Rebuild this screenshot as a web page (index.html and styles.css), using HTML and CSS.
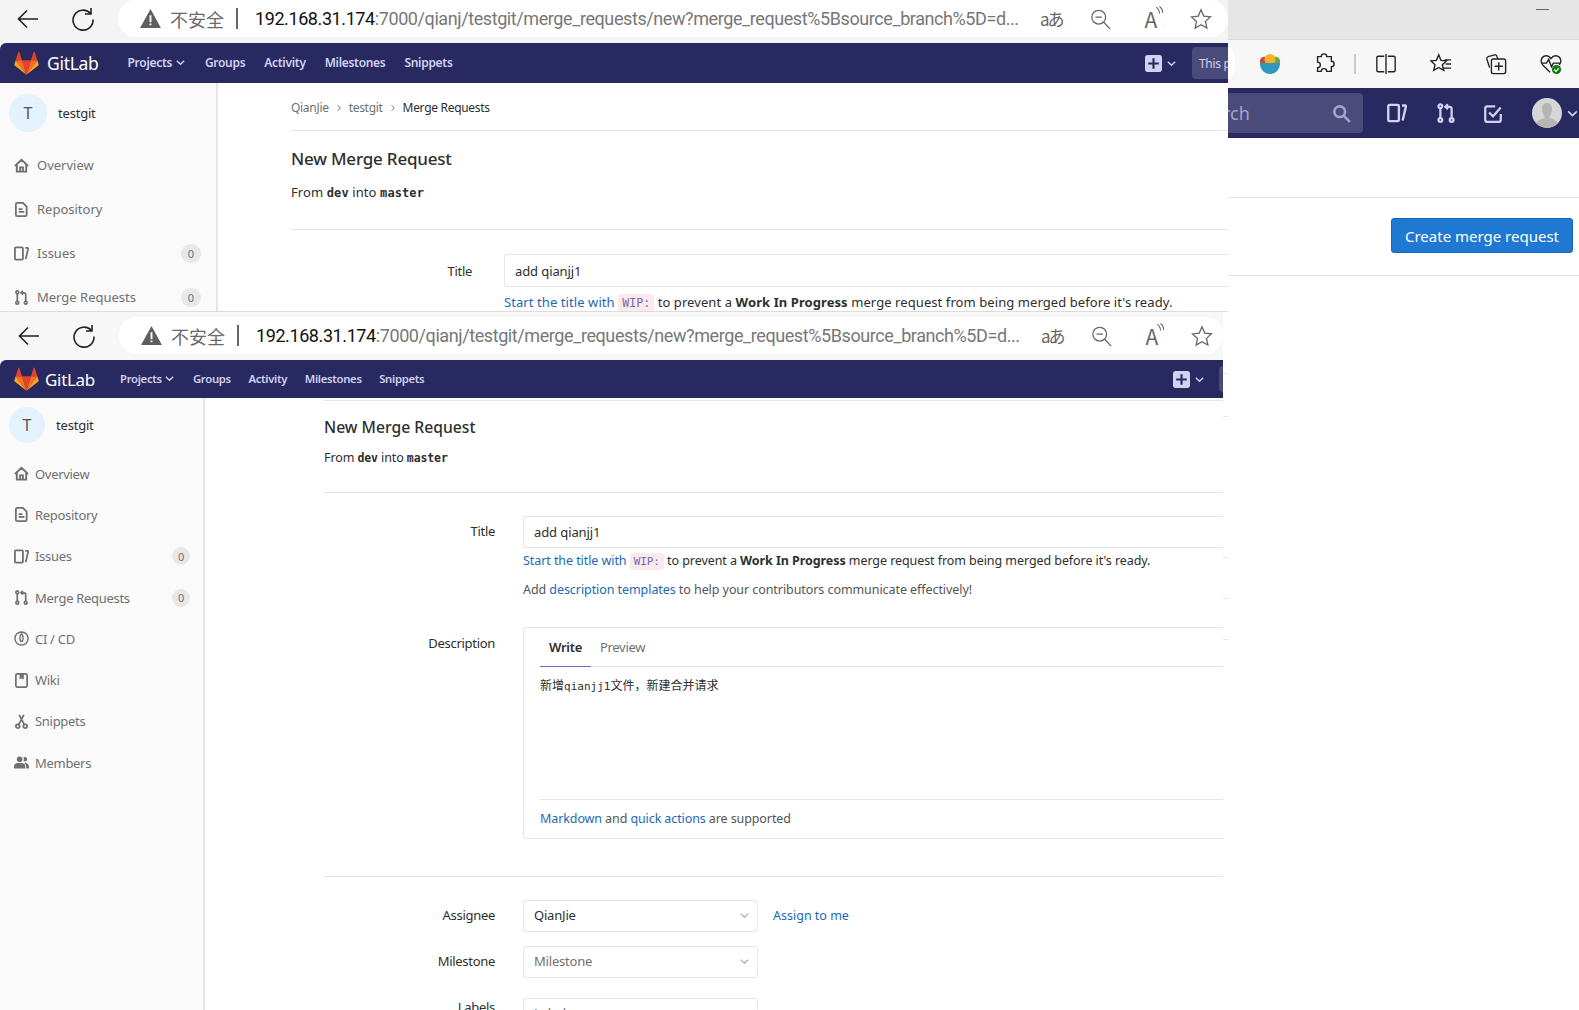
FILE: index.html
```html
<!DOCTYPE html>
<html lang="zh-CN">
<head>
    <meta charset="UTF-8">
    <title>New Merge Request</title>
    <link rel="stylesheet" href="styles.css">
</head>
<body>
    <svg class="defs" width="0" height="0">
        <symbol id="i-tanuki" viewBox="0 0 36 35">
            <path fill="#e24329" d="M18 34.5 24.6 13.5H11.4Z"/>
            <path fill="#fc6d26" d="M18 34.5 11.4 13.5H2.2Z"/>
            <path fill="#fca326" d="M2.2 13.5.3 19.6a1.4 1.4 0 0 0 .5 1.5L18 34.5Z"/>
            <path fill="#e24329" d="M2.2 13.5h9.2L7.5 1a.7.7 0 0 0-1.3 0Z"/>
            <path fill="#fc6d26" d="M18 34.5 24.6 13.5h9.2Z"/>
            <path fill="#fca326" d="M33.8 13.5l1.9 6.1a1.4 1.4 0 0 1-.5 1.5L18 34.5Z"/>
            <path fill="#e24329" d="M33.8 13.5h-9.2L28.5 1a.7.7 0 0 1 1.3 0Z"/>
        </symbol>
        <symbol id="i-back" viewBox="0 0 24 24"><path fill="none" stroke="currentColor" stroke-width="1.6" d="M22 12H2.5M11 3.5 2.5 12l8.5 8.5"/></symbol>
        <symbol id="i-reload" viewBox="0 0 24 24"><path fill="none" stroke="currentColor" stroke-width="1.6" d="M19.5 6.5A10 10 0 1 0 22 12.5M20 1v6h-6"/></symbol>
        <symbol id="i-warn" viewBox="0 0 22 20"><path fill="#5f5f5f" d="M11 0 22 20H0Z"/><path fill="#fff" d="M10 6.500h2v7.500h-2zM10 15.200h2v2h-2z"/></symbol>
        <symbol id="i-zoomout" viewBox="0 0 24 24"><path fill="none" stroke="currentColor" stroke-width="1.4" d="M17 10a7.500 7.500 0 1 1-15 0 7.500 7.500 0 0 1 15 0ZM15 15.500l7 7.500M6 10h7"/></symbol>
        <symbol id="i-star" viewBox="0 0 24 24"><path fill="none" stroke="currentColor" stroke-width="1.4" d="m12 2 3 6.800 7.400.8-5.500 5 1.500 7.300L12 18.200 5.600 22l1.500-7.300-5.500-5L9 8.800Z"/></symbol>
        <symbol id="i-chev" viewBox="0 0 12 12"><path fill="none" stroke="currentColor" stroke-width="1.500" d="m2 4 4 4 4-4"/></symbol>
        <symbol id="i-plus" viewBox="0 0 16 16"><rect width="16" height="16" rx="2.500" fill="#d1d1f0"/><path fill="#292961" d="M7 3h2v4h4v2H9v4H7V9H3V7h4Z"/></symbol>
        <symbol id="i-home" viewBox="0 0 16 16"><path fill="none" stroke="currentColor" stroke-width="2" d="M1 8.500 8 2l7 6.500M3 7v7.500h10V7M6.500 14.500V10h3v4.500"/></symbol>
        <symbol id="i-doc" viewBox="0 0 16 16"><path fill="none" stroke="currentColor" stroke-width="1.900" d="M3.500 1h6l4 4v8.500a1.500 1.500 0 0 1-1.500 1.500H3.500A1.500 1.500 0 0 1 2 13.500v-11A1.500 1.500 0 0 1 3.500 1ZM5 7.500h4M5 10.500h6"/></symbol>
        <symbol id="i-issues" viewBox="0 0 16 16"><path fill="none" stroke="currentColor" stroke-width="1.900" d="M2 1.500h6.500a1 1 0 0 1 1 1v11a1 1 0 0 1-1 1H2a1 1 0 0 1-1-1v-11a1 1 0 0 1 1-1ZM12 2h2.500a.7.7 0 0 1 .6 1L12.500 14"/></symbol>
        <symbol id="i-merge" viewBox="0 0 16 16"><g fill="none" stroke="currentColor" stroke-width="1.800"><circle cx="3.500" cy="2.500" r="1.500"/><circle cx="3.500" cy="13.500" r="1.500"/><circle cx="12.500" cy="13.500" r="1.500"/><path d="M3.500 4v8M12.500 12V4.500A1.500 1.500 0 0 0 11 3H7.500M9.500 1 7.500 3l2 2"/></g></symbol>
        <symbol id="i-rocket" viewBox="0 0 16 16"><g fill="none" stroke="currentColor" stroke-width="1.500"><circle cx="8" cy="8" r="7"/><path d="M8 3c2 2 2 5 1 8H7C6 8 6 5 8 3Z"/></g></symbol>
        <symbol id="i-book" viewBox="0 0 16 16"><path fill="none" stroke="currentColor" stroke-width="1.800" d="M3.500 1h9A1.500 1.500 0 0 1 14 2.500v11a1.500 1.500 0 0 1-1.500 1.500h-9A1.500 1.500 0 0 1 2 13.500v-11A1.500 1.500 0 0 1 3.500 1Z"/><path fill="currentColor" d="M6 1h4.500v6L8.250 5.500 6 7Z"/></symbol>
        <symbol id="i-scissors" viewBox="0 0 16 16"><g fill="none" stroke="currentColor" stroke-width="1.800"><circle cx="4" cy="13" r="2"/><circle cx="12" cy="13" r="2"/><path d="M5 11.300 10.500 1M11 11.300 5.500 1"/></g></symbol>
        <symbol id="i-users" viewBox="0 0 16 16"><path fill="currentColor" d="M6 1.500a3 3 0 1 1 0 6 3 3 0 0 1 0-6ZM11.500 2a2.500 2.500 0 1 1-1.500 4.500 4 4 0 0 0 0-4A2.500 2.500 0 0 1 11.500 2ZM0 14.500v-2A4 4 0 0 1 4 8.500h4a4 4 0 0 1 4 4v2ZM13 14.500v-2A5 5 0 0 0 11 8.500a4 4 0 0 1 5 4v2Z"/></symbol>
    </svg>

    <!-- window behind, only its right edge shows -->
    <section class="window win-back">
        <div class="titlebar"><span class="minimize"></span></div>
        <div class="ext-bar">
            <span class="pill-end"></span>
            <svg class="ext ext-bowl" viewBox="0 0 24 24">
                <circle cx="6" cy="9" r="5" fill="#c8473f"/>
                <circle cx="18" cy="9" r="5" fill="#67a84a"/>
                <circle cx="12" cy="7" r="6" fill="#f3b22a"/>
                <path fill="#2f97bb" d="M1 11h22c0 7-5 12-11 12S1 18 1 11Z"/>
            </svg>
            <svg class="ext ext-puzzle" viewBox="0 0 24 24"><path fill="none" stroke="#222" stroke-width="1.500" d="M9 4a3 3 0 0 1 6 0h5v5a3 3 0 0 1 0 6v5h-5a3 3 0 0 0-6 0H5v-4a3 3 0 0 0 0-6V4Z"/></svg>
            <span class="ext-sep"></span>
            <svg class="ext ext-split" viewBox="0 0 24 24"><path fill="none" stroke="#222" stroke-width="1.500" d="M10 3.500H3.500A1.500 1.500 0 0 0 2 5v14a1.500 1.500 0 0 0 1.500 1.500H10M14 3.500h6.500A1.500 1.500 0 0 1 22 5v14a1.500 1.500 0 0 1-1.500 1.500H14M12 1v22"/></svg>
            <svg class="ext ext-favs" viewBox="0 0 24 24"><path fill="none" stroke="#222" stroke-width="1.500" d="M9.500 2 12 8l6 .6-4.500 4.200L15 19l-5.500-3.200L4 19l1.500-6.200L1 8.600 7 8ZM16 7.500h7M17 12h6M15 16.500h8"/></svg>
            <svg class="ext ext-coll" viewBox="0 0 24 24"><path fill="none" stroke="#222" stroke-width="1.500" d="M5 16 2 6.500A2 2 0 0 1 3.500 4l7-2A2 2 0 0 1 13 3.500l.7 2.500M9 6.500h11.500A2 2 0 0 1 22.500 8.500v12a2 2 0 0 1-2 2H9a2 2 0 0 1-2-2V8.500a2 2 0 0 1 2-2ZM15 10v9M10.500 14.500h9"/></svg>
            <svg class="ext ext-health" viewBox="0 0 24 24">
                <path fill="none" stroke="#222" stroke-width="1.500" d="M11 21 3 13C0 10 1 3.500 6.500 3c2.500-.2 4 1 5.500 3 1.500-2 3-3.200 5.500-3C23 3.500 24 10 21 13M1 11h6l2.500-4 3 8 2-4h7"/>
                <circle cx="18" cy="18" r="5" fill="#107c10"/>
                <path fill="none" stroke="#fff" stroke-width="1.400" d="m15.500 18 2 2 3-3.500"/>
            </svg>
        </div>
        <div class="back-nav">
            <div class="search-box">
                <span class="search-rest">rch</span>
                <svg class="search-icon" viewBox="0 0 16 16"><path fill="none" stroke="currentColor" stroke-width="2.200" d="M11 6.500a4.500 4.500 0 1 1-9 0 4.500 4.500 0 0 1 9 0ZM10 10l5 5"/></svg>
            </div>
            <svg class="back-nav-icon icon-issues"><use href="#i-issues"/></svg>
            <svg class="back-nav-icon icon-merge"><use href="#i-merge"/></svg>
            <svg class="back-nav-icon icon-todo" viewBox="0 0 18 18"><path fill="none" stroke="currentColor" stroke-width="2" d="M16 10v5a2 2 0 0 1-2 2H4a2 2 0 0 1-2-2V5a2 2 0 0 1 2-2h7M5.500 8.500 9 12l7-8"/></svg>
            <svg class="avatar" viewBox="0 0 30 30">
                <circle cx="15" cy="15" r="15" fill="#d6d6d6"/>
                <path fill="#b5b5b5" d="M15 5c3 0 5 2.500 5 6s-1.500 6-2.500 7v2c3 1 6 2 8.500 5a15 15 0 0 1-22 0c2.500-3 5.500-4 8.500-5v-2C11.500 17 10 14.500 10 11c0-3.500 2-6 5-6Z"/>
            </svg>
            <svg class="nav-chev avatar-chev"><use href="#i-chev"/></svg>
        </div>
        <div class="back-spacer"></div>
        <div class="back-actions"><button class="btn-create">Create merge request</button></div>
    </section>

    <!-- first screenshot -->
    <section class="window win-top">
        <header class="browser-bar">
            <svg class="bar-icon"><use href="#i-back"/></svg>
            <svg class="bar-icon"><use href="#i-reload"/></svg>
            <div class="urlbar">
                <svg class="warn"><use href="#i-warn"/></svg>
                <span class="not-secure">不安全</span>
                <span class="url-sep"></span>
                <span class="url"><span class="url-host">192.168.31.174</span>:7000/qianj/testgit/merge_requests/new?merge_request%5Bsource_branch%5D=d...</span>
                <div class="url-tools">
                    <span class="tool tool-translate">aあ</span>
                    <svg class="tool"><use href="#i-zoomout"/></svg>
                    <span class="tool tool-read">A<svg class="read-waves" viewBox="0 0 8 12"><path fill="none" stroke="currentColor" d="M1 1c2 1.500 3 3.500 3 6M4 .5c2 1.500 3 3.500 3 6"/></svg></span>
                    <svg class="tool"><use href="#i-star"/></svg>
                </div>
            </div>
        </header>
        <nav class="gl-nav">
            <svg class="tanuki"><use href="#i-tanuki"/></svg>
            <span class="brand">GitLab</span>
            <ul class="nav-links">
                <li>Projects <svg class="nav-chev"><use href="#i-chev"/></svg></li>
                <li>Groups</li>
                <li>Activity</li>
                <li>Milestones</li>
                <li>Snippets</li>
            </ul>
            <svg class="nav-plus"><use href="#i-plus"/></svg>
            <svg class="nav-chev"><use href="#i-chev"/></svg>
            <span class="nav-search">This p</span>
        </nav>
        <div class="gl-body">
            <aside class="sidebar">
                <div class="project"><span class="project-avatar">T</span><span class="project-name">testgit</span></div>
                <ul class="side-menu">
                    <li><svg class="side-icon"><use href="#i-home"/></svg>Overview</li>
                    <li><svg class="side-icon"><use href="#i-doc"/></svg>Repository</li>
                    <li><svg class="side-icon"><use href="#i-issues"/></svg>Issues<span class="badge">0</span></li>
                    <li><svg class="side-icon"><use href="#i-merge"/></svg>Merge Requests<span class="badge">0</span></li>
                </ul>
            </aside>
            <main class="main">
                <div class="crumbs">
                    <span>QianJie</span><svg class="crumb-chev"><use href="#i-chev"/></svg>
                    <span>testgit</span><svg class="crumb-chev"><use href="#i-chev"/></svg>
                    <span class="crumb-now">Merge Requests</span>
                </div>
                <div class="page-head">
                    <h1>New Merge Request</h1>
                    <p>From <code>dev</code> into <code>master</code></p>
                </div>
                <div class="form-row">
                    <label>Title</label>
                    <div class="field">
                        <div class="input-line">add qianjj1</div>
                        <p class="hint"><a>Start the title with</a> <code class="wip">WIP:</code> to prevent a <b>Work In Progress</b> merge request from being merged before it's ready.</p>
                    </div>
                </div>
            </main>
        </div>
    </section>

    <!-- second screenshot -->
    <section class="window win-bottom">
        <header class="browser-bar">
            <svg class="bar-icon"><use href="#i-back"/></svg>
            <svg class="bar-icon"><use href="#i-reload"/></svg>
            <div class="urlbar">
                <svg class="warn"><use href="#i-warn"/></svg>
                <span class="not-secure">不安全</span>
                <span class="url-sep"></span>
                <span class="url"><span class="url-host">192.168.31.174</span>:7000/qianj/testgit/merge_requests/new?merge_request%5Bsource_branch%5D=d...</span>
                <div class="url-tools">
                    <span class="tool tool-translate">aあ</span>
                    <svg class="tool"><use href="#i-zoomout"/></svg>
                    <span class="tool tool-read">A<svg class="read-waves" viewBox="0 0 8 12"><path fill="none" stroke="currentColor" d="M1 1c2 1.500 3 3.500 3 6M4 .5c2 1.500 3 3.500 3 6"/></svg></span>
                    <svg class="tool"><use href="#i-star"/></svg>
                </div>
            </div>
        </header>
        <nav class="gl-nav">
            <svg class="tanuki"><use href="#i-tanuki"/></svg>
            <span class="brand">GitLab</span>
            <ul class="nav-links">
                <li>Projects <svg class="nav-chev"><use href="#i-chev"/></svg></li>
                <li>Groups</li>
                <li>Activity</li>
                <li>Milestones</li>
                <li>Snippets</li>
            </ul>
            <svg class="nav-plus"><use href="#i-plus"/></svg>
            <svg class="nav-chev"><use href="#i-chev"/></svg>
            <span class="nav-search"></span>
        </nav>
        <div class="gl-body">
            <aside class="sidebar">
                <div class="project"><span class="project-avatar">T</span><span class="project-name">testgit</span></div>
                <ul class="side-menu">
                    <li><svg class="side-icon"><use href="#i-home"/></svg>Overview</li>
                    <li><svg class="side-icon"><use href="#i-doc"/></svg>Repository</li>
                    <li><svg class="side-icon"><use href="#i-issues"/></svg>Issues<span class="badge">0</span></li>
                    <li><svg class="side-icon"><use href="#i-merge"/></svg>Merge Requests<span class="badge">0</span></li>
                    <li><svg class="side-icon"><use href="#i-rocket"/></svg>CI / CD</li>
                    <li><svg class="side-icon"><use href="#i-book"/></svg>Wiki</li>
                    <li><svg class="side-icon"><use href="#i-scissors"/></svg>Snippets</li>
                    <li><svg class="side-icon"><use href="#i-users"/></svg>Members</li>
                </ul>
            </aside>
            <main class="main">
                <div class="page-head">
                    <h1>New Merge Request</h1>
                    <p>From <code>dev</code> into <code>master</code></p>
                </div>
                <div class="form-row">
                    <label>Title</label>
                    <div class="field">
                        <div class="input-line">add qianjj1</div>
                        <p class="hint"><a>Start the title with</a> <code class="wip">WIP:</code> to prevent a <b>Work In Progress</b> merge request from being merged before it's ready.</p>
                        <p class="hint hint-add">Add <a>description templates</a> to help your contributors communicate effectively!</p>
                    </div>
                </div>
                <div class="form-row row-desc">
                    <label>Description</label>
                    <div class="md-box">
                        <div class="md-tabs"><span class="tab tab-on">Write</span><span class="tab">Preview</span></div>
                        <div class="md-text">新增<span class="md-mono">qianjj1</span>文件，新建合并请求</div>
                        <div class="md-foot"><a>Markdown</a> and <a>quick actions</a> are supported</div>
                    </div>
                </div>
                <div class="form-row row-select row-assignee">
                    <label>Assignee</label>
                    <div class="select-wrap">
                        <div class="select">QianJie<svg class="select-chev"><use href="#i-chev"/></svg></div>
                        <a class="assign-me">Assign to me</a>
                    </div>
                </div>
                <div class="form-row row-select row-milestone">
                    <label>Milestone</label>
                    <div class="select-wrap">
                        <div class="select select-empty">Milestone<svg class="select-chev"><use href="#i-chev"/></svg></div>
                    </div>
                </div>
                <div class="form-row row-select row-labels">
                    <label>Labels</label>
                    <div class="select-wrap">
                        <div class="select select-empty">Labels<svg class="select-chev"><use href="#i-chev"/></svg></div>
                    </div>
                </div>
            </main>
        </div>
    </section>
    <div class="edge-ticks"></div>
</body>
</html>
```

FILE: styles.css
```css
* {
    box-sizing: border-box;
}

body {
    margin: 0;
    height: 1010px;
    overflow: hidden;
    background: #fff;
    color: #2e2e2e;
    font-family: "Noto Sans", "Noto Sans CJK SC", sans-serif;
    font-size: 13px;
}

.defs {
    position: absolute;
}

ul {
    list-style: none;
    margin: 0;
    padding: 0;
}

a {
    color: #1b69b6;
}

/* the three pasted windows */
.window {
    position: absolute;
    overflow: hidden;
    background: #fff;
}

.win-back {
    left: 1228px;
    top: 0;
    width: 351px;
    height: 311px;
}

.win-top {
    left: 0;
    top: 0;
    width: 1228px;
    height: 312px;
    border-bottom: 1px solid #dcdcdc;
}

.win-bottom {
    left: 0;
    top: 312px;
    width: 1223px;
    height: 698px;
}

/* bits of a further window that stick out past the lower one */
.edge-ticks {
    position: absolute;
    left: 1223px;
    top: 373px;
    width: 5px;
    height: 267px;
    background:
        linear-gradient(#e5e5e5, #e5e5e5) 0 0 / 5px 1px no-repeat,
        linear-gradient(#e5e5e5, #e5e5e5) 0 43px / 5px 1px no-repeat,
        linear-gradient(#e5e5e5, #e5e5e5) 0 184px / 5px 1px no-repeat,
        linear-gradient(#e5e5e5, #e5e5e5) 0 225px / 5px 1px no-repeat,
        linear-gradient(#e5e5e5, #e5e5e5) 0 266px / 5px 1px no-repeat;
}

/* browser toolbar */
.browser-bar {
    display: flex;
    align-items: center;
    background: #f4f4f4;
    color: #222;
}

.win-top .browser-bar {
    height: 43px;
    padding: 0 0 6px 16px;
}

.win-bottom .browser-bar {
    height: 48px;
    padding: 5px 0 6px 17px;
    background: #f7f7f7;
}

.bar-icon {
    width: 24px;
    height: 24px;
    margin-right: 31px;
    flex: none;
}

.urlbar {
    display: flex;
    align-items: center;
    flex: 1;
    height: 37px;
    margin-left: -8px;
    padding-left: 22px;
    background: #fff;
    border-radius: 18px;
    font-family: "Noto Sans CJK SC", "Noto Sans", sans-serif;
    font-size: 18px;
    color: #777;
    white-space: nowrap;
}

.warn {
    width: 21px;
    height: 19px;
    flex: none;
}

.not-secure {
    margin-left: 9px;
    color: #6a6a6a;
}

.url-sep {
    width: 2px;
    height: 21px;
    margin: 0 17px 0 12px;
    background: #666;
}

.url {
    font-family: Roboto, "Noto Sans", sans-serif;
    font-size: 18px;
    letter-spacing: -0.41px;
}

.url-host {
    color: #111;
}

.url-tools {
    display: flex;
    align-items: center;
    margin-left: auto;
    color: #666;
}

.tool {
    position: relative;
    display: block;
    width: 22px;
    height: 22px;
    margin-right: 28px;
    line-height: 22px;
    text-align: center;
}

.url-tools .tool:last-child {
    margin-right: 16px;
}

.win-bottom .url-tools .tool:last-child {
    margin-right: 10px;
}

.tool-translate {
    font-size: 17px;
    letter-spacing: -2px;
}

.tool-read {
    font-size: 21px;
}

.read-waves {
    position: absolute;
    right: -2px;
    top: -2px;
    width: 9px;
    height: 13px;
}

/* gitlab top bar */
.gl-nav {
    display: flex;
    align-items: center;
    background: #292961;
    color: #d1d1f0;
    font-weight: 600;
    border-radius: 6px 0 0 0;
}

.win-top .gl-nav {
    height: 40px;
    padding-left: 14px;
}

.win-bottom .gl-nav {
    height: 38px;
    padding-left: 14px;
}

.tanuki {
    width: 25px;
    height: 24px;
    flex: none;
}

.brand {
    margin-left: 8px;
    font-size: 17.500px;
    font-weight: 400;
    color: #fff;
    letter-spacing: -0.3px;
}

.win-bottom .brand {
    margin-left: 6px;
    font-size: 17px;
}

.nav-links {
    display: flex;
    padding-bottom: 2px;
    font-size: 12px;
    letter-spacing: -0.3px;
    flex: 1;
}

.win-top .nav-links {
    margin-left: 29px;
    gap: 19px;
}

.win-bottom .nav-links {
    margin-left: 25px;
    gap: 17.500px;
    font-size: 11.300px;
}

.nav-chev {
    width: 11px;
    height: 11px;
    vertical-align: -1px;
    flex: none;
}

.nav-plus {
    width: 17px;
    height: 17px;
    margin-right: 4px;
    flex: none;
}

.nav-search {
    display: flex;
    align-items: center;
    width: 36px;
    height: 32px;
    margin-left: 15px;
    padding-left: 7px;
    overflow: hidden;
    background: #4a4a7b;
    border-radius: 4px 0 0 4px;
    font-weight: 400;
    font-size: 12px;
    letter-spacing: -0.3px;
    white-space: nowrap;
}

.win-bottom .nav-search {
    width: 4px;
    height: 26px;
    margin-left: 14px;
    padding: 0;
}

/* gitlab page body */
.gl-body {
    display: flex;
}

.sidebar {
    flex: none;
    height: 800px;
    background: #fafafa;
    border-right: 2px solid #e5e5e5;
    color: #707070;
}

.win-top .sidebar {
    width: 218px;
}

.win-bottom .sidebar {
    width: 205px;
}

.project {
    display: flex;
    align-items: center;
    padding-left: 9px;
    color: #2e2e2e;
}

.win-top .project {
    height: 60px;
}

.win-bottom .project {
    height: 54px;
}

.project-avatar {
    display: flex;
    align-items: center;
    justify-content: center;
    width: 38px;
    height: 38px;
    border-radius: 50%;
    background: #e3f2fd;
    font-size: 16px;
    color: #555;
}

.win-bottom .project-avatar {
    width: 36px;
    height: 36px;
}

.project-name {
    margin-left: 11px;
    letter-spacing: -0.2px;
}

.side-menu li {
    display: flex;
    align-items: center;
    padding: 0 15px 0 14px;
}

.win-top .side-menu li {
    height: 44px;
}

.win-bottom .side-menu {
    padding-top: 1px;
}

.win-bottom .side-menu li {
    height: 41.300px;
    padding-right: 13px;
    letter-spacing: -0.3px;
}

.side-icon {
    width: 15px;
    height: 15px;
    margin-right: 8px;
    flex: none;
}

.win-bottom .side-icon {
    margin-right: 6px;
}

.badge {
    display: flex;
    align-items: center;
    justify-content: center;
    width: 20px;
    height: 19px;
    margin-left: auto;
    border-radius: 10px;
    background: #e8e8e8;
    font-size: 11px;
    color: #707070;
}

.win-bottom .badge {
    width: 18px;
    height: 18px;
}

.main {
    flex: 1;
    min-width: 0;
}

.win-top .main {
    padding-left: 73px;
}

.win-bottom .main {
    padding-left: 119px;
}

.crumbs {
    display: flex;
    align-items: center;
    height: 48px;
    padding-top: 2px;
    border-bottom: 1px solid #e5e5e5;
    font-size: 12px;
    color: #707070;
    letter-spacing: -0.3px;
}

.crumb-chev {
    width: 8px;
    height: 8px;
    margin: 0 6px;
    transform: rotate(-90deg);
}

.crumb-now {
    color: #2e2e2e;
}

.page-head {
    border-bottom: 1px solid #e5e5e5;
}

.win-top .page-head {
    height: 99px;
    padding-top: 16px;
}

.win-bottom .page-head {
    height: 93px;
    margin-top: 2px;
    border-top: 1px solid #e5e5e5;
    padding-top: 14px;
}

h1 {
    margin: 0;
    font-size: 17px;
    font-weight: 500;
    line-height: 24px;
    letter-spacing: -0.2px;
}

.win-bottom h1 {
    font-size: 15.700px;
    letter-spacing: 0;
}

.page-head p {
    margin: 11px 0 0;
    line-height: 20px;
    letter-spacing: 0.1px;
}

.win-bottom .page-head p {
    margin-top: 9px;
    font-size: 12.500px;
    letter-spacing: -0.1px;
}

code {
    font-family: "DejaVu Sans Mono", monospace;
    font-size: 12px;
    font-weight: 700;
}

.win-bottom code {
    font-size: 11.500px;
}

/* form rows */
.form-row {
    display: grid;
    align-items: start;
}

.win-top .form-row {
    grid-template-columns: 181px 1fr;
    column-gap: 32px;
    margin-top: 24px;
}

.win-bottom .form-row {
    grid-template-columns: 171px 1fr;
    column-gap: 28px;
    margin-top: 23px;
}

.form-row label {
    padding-top: 8px;
    text-align: right;
    color: #2e2e2e;
    letter-spacing: -0.3px;
}

.win-bottom .form-row label {
    padding-top: 6px;
}

.input-line {
    display: flex;
    align-items: center;
    height: 33px;
    padding-left: 10px;
    border: 1px solid #e5e5e5;
    border-right: 0;
    border-radius: 3px 0 0 3px;
    letter-spacing: -0.1px;
}

.win-bottom .input-line {
    height: 32px;
}

.hint {
    margin: 5px 0 0;
    line-height: 20px;
    white-space: nowrap;
    letter-spacing: 0.08px;
    color: #2e2e2e;
}

.win-bottom .hint {
    margin-top: 3px;
    font-size: 12.500px;
    letter-spacing: -0.07px;
}

.win-bottom .hint-add {
    margin-top: 8px;
    color: #555;
}

.hint b {
    font-weight: 700;
}

.wip {
    padding: 2px 4px;
    background: #fbe9eb;
    border-radius: 3px;
    color: #6b6bb0;
    font-weight: 400;
    font-size: 11.500px;
}

.win-bottom .wip {
    font-size: 11px;
}

/* description editor */
.win-bottom .row-desc {
    margin-top: 27px;
}

.win-bottom .row-desc label {
    padding-top: 7px;
}

.md-box {
    height: 212px;
    padding: 0 0 0 16px;
    border: 1px solid #e5e5e5;
    border-right: 0;
    border-radius: 3px 0 0 3px;
}

.md-tabs {
    display: flex;
    height: 39px;
    border-bottom: 1px solid #e5e5e5;
}

.tab {
    display: flex;
    align-items: center;
    padding: 0 9px 1px;
    color: #707070;
    letter-spacing: -0.3px;
    height: 39px;
}

.tab-on {
    color: #2e2e2e;
    font-weight: 600;
    border-bottom: 1px solid #6b6bd0;
}

.md-text {
    height: 133px;
    padding-top: 9px;
    border-bottom: 1px solid #e5e5e5;
    font-family: "Noto Sans CJK SC", sans-serif;
    font-size: 12px;
    line-height: 18px;
}

.md-mono {
    font-family: "DejaVu Sans Mono", monospace;
    font-size: 11px;
}

.md-foot {
    padding-top: 10px;
    color: #555;
    font-size: 12.500px;
    letter-spacing: -0.1px;
}

/* selects */
.select-wrap {
    display: flex;
    align-items: center;
    gap: 15px;
}

.win-bottom .row-select {
    align-items: center;
}

.win-bottom .row-select label {
    padding: 0 0 2px;
}

.win-bottom .row-assignee {
    margin-top: 37px;
    padding-top: 23px;
    border-top: 1px solid #e5e5e5;
}

.win-bottom .row-milestone {
    margin-top: 14px;
}

.win-bottom .row-labels {
    margin-top: 20px;
    align-items: start;
}

.select {
    display: flex;
    align-items: center;
    justify-content: space-between;
    width: 235px;
    height: 32px;
    padding: 0 7px 2px 10px;
    border: 1px solid #e5e5e5;
    border-radius: 3px;
    letter-spacing: -0.2px;
}

.select-empty {
    color: #707070;
}

.select-chev {
    width: 11px;
    height: 11px;
    color: #b5b5b5;
}

.assign-me {
    padding-bottom: 2px;
    font-size: 12.500px;
}

/* back window */
.titlebar {
    position: relative;
    height: 40px;
    background: #e6e6e6;
    border-bottom: 1px solid #dadada;
}

.minimize {
    position: absolute;
    left: 308px;
    top: 9px;
    width: 13px;
    height: 1px;
    background: #666;
}

.ext-bar {
    position: relative;
    display: flex;
    align-items: center;
    height: 48px;
    background: #f7f7f7;
}

.pill-end {
    position: absolute;
    left: -14px;
    top: 5px;
    width: 21px;
    height: 36px;
    border-radius: 50%;
    background: #fff;
}

.ext {
    width: 22px;
    height: 22px;
    flex: none;
}

.ext-bowl {
    margin-left: 31px;
}

.ext-puzzle {
    margin-left: 32px;
}

.ext-sep {
    width: 2px;
    height: 20px;
    margin: 0 20px 0 19px;
    background: #ccc;
}

.ext-favs,
.ext-coll,
.ext-health {
    margin-left: 33px;
}

.ext-split {
    margin-left: -1px;
}

.back-nav {
    display: flex;
    align-items: center;
    height: 50px;
    background: #292961;
    color: #d1d1f0;
}

.search-box {
    display: flex;
    align-items: center;
    justify-content: space-between;
    width: 137px;
    height: 40px;
    padding-right: 12px;
    background: #4a4a7b;
    border-radius: 0 4px 4px 0;
    font-size: 18px;
    color: #a5a5c5;
}

.search-rest {
    margin-left: -5px;
}

.search-icon {
    width: 19px;
    height: 19px;
}

.back-nav-icon {
    width: 20px;
    height: 20px;
    flex: none;
}

.icon-issues {
    margin-left: 24px;
}

.icon-merge {
    margin-left: 29px;
}

.icon-todo {
    margin-left: 27px;
}

.avatar {
    width: 30px;
    height: 30px;
    margin-left: 29px;
    flex: none;
}

.avatar-chev {
    width: 13px;
    height: 13px;
    margin-left: 4px;
}

.back-spacer {
    height: 60px;
    border-bottom: 1px solid #e5e5e5;
}

.back-actions {
    display: flex;
    justify-content: flex-end;
    height: 78px;
    padding: 20px 6px 0 0;
    border-bottom: 1px solid #e5e5e5;
}

.btn-create {
    width: 182px;
    height: 35px;
    border: 1px solid #1b69b6;
    border-radius: 3px;
    background: #1f78d1;
    color: #fff;
    font-family: "Noto Sans", sans-serif;
    font-size: 15px;
}
```
